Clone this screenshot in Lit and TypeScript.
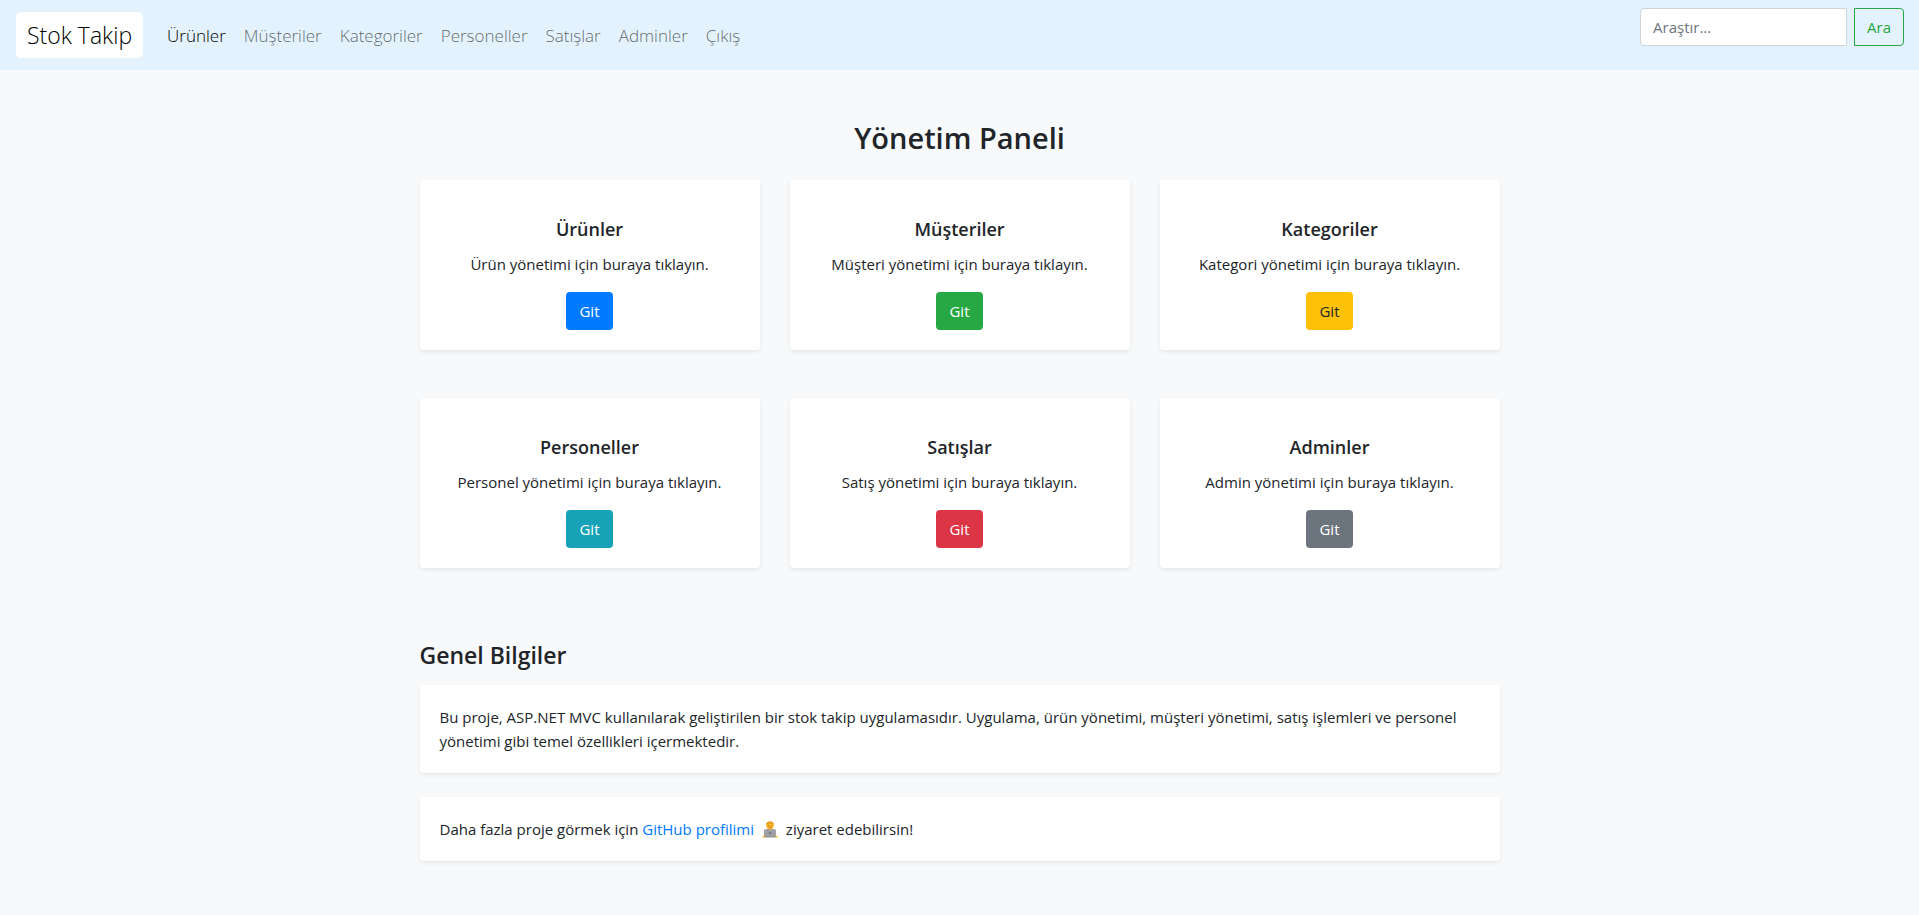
import { LitElement, html, css } from "lit";
import { customElement } from "lit/decorators.js";

interface Section {
  name: string;
  subject: string;
  tone: string;
}

const SECTIONS: Section[] = [
  { name: "Ürünler", subject: "Ürün", tone: "primary" },
  { name: "Müşteriler", subject: "Müşteri", tone: "success" },
  { name: "Kategoriler", subject: "Kategori", tone: "warning" },
  { name: "Personeller", subject: "Personel", tone: "info" },
  { name: "Satışlar", subject: "Satış", tone: "danger" },
  { name: "Adminler", subject: "Admin", tone: "secondary" },
];

const NAV = [...SECTIONS.map((s) => s.name), "Çıkış"];

@customElement("top-nav")
class TopNav extends LitElement {
  static styles = css`
    :host {
      display: block;
    }
    .bar {
      display: flex;
      align-items: flex-start;
      justify-content: space-between;
      padding: 8px 15px 8px 16px;
      min-height: 54px;
      background: #e3f2fd;
    }
    .left {
      display: flex;
      align-items: center;
      align-self: center;
      gap: 24px;
    }
    .brand {
      padding: 5px 11px;
      border-radius: 5px;
      background: #fff;
      color: #000;
      font-size: 23px;
      line-height: 36px;
      font-weight: 300;
      text-decoration: none;
    }
    .links {
      display: flex;
      gap: 18px;
      list-style: none;
      margin: 0;
      padding: 0;
    }
    .link {
      color: rgba(0, 0, 0, 0.6);
      font-size: 17px;
      line-height: 27px;
      font-weight: 300;
      text-decoration: none;
    }
    .active {
      color: #000;
    }
    .search {
      display: flex;
      gap: 7px;
    }
    .field {
      box-sizing: border-box;
      width: 207px;
      height: 38px;
      padding: 6px 12px;
      border: 1px solid #ced4da;
      border-radius: 4px 0 0 4px;
      background: #fff;
      font: inherit;
      color: #495057;
    }
    .field::placeholder {
      color: #6c757d;
      opacity: 1;
    }
    .go {
      height: 38px;
      padding: 0 12px;
      border: 1px solid #28a745;
      border-radius: 0 4px 4px 0;
      background: transparent;
      color: #28a745;
      font: inherit;
      cursor: pointer;
    }
  `;

  render() {
    return html`
      <nav class="bar">
        <div class="left">
          <a class="brand" href="#">Stok Takip</a>
          <ul class="links">
            ${NAV.map(
              (n, i) =>
                html`<li><a class="link ${i === 0 ? "active" : ""}" href="#">${n}</a></li>`
            )}
          </ul>
        </div>
        <form class="search">
          <input class="field" type="search" placeholder="Araştır..." aria-label="Araştır" />
          <button class="go" type="button">Ara</button>
        </form>
      </nav>
    `;
  }
}

@customElement("app-root")
class AppRoot extends LitElement {
  static styles = css`
    :host {
      display: block;
      min-height: 100vh;
      background: #f8f9fb;
      color: #212529;
      font-family: "Segoe UI", "Open Sans", "Noto Sans", sans-serif;
      font-size: 15px;
      line-height: 24px;
    }
    .page {
      max-width: 1080px;
      margin: 0 auto;
      padding: 48px 15px;
    }
    h1,
    h2,
    h3,
    p {
      margin: 0;
    }
    .title {
      margin-bottom: 22px;
      text-align: center;
      font-size: 29px;
      line-height: 40px;
      font-weight: 600;
    }
    .grid {
      display: grid;
      grid-template-columns: repeat(auto-fit, minmax(300px, 1fr));
      gap: 48px 30px;
    }
    .panel {
      padding: 20px;
      border-radius: 4px;
      background: #fff;
      box-shadow: 0 2px 4px rgba(0, 0, 0, 0.075);
    }
    .card {
      display: flex;
      flex-direction: column;
      align-items: center;
      padding-top: 36px;
      text-align: center;
    }
    .name {
      margin-bottom: 10px;
      font-size: 18px;
      line-height: 26px;
      font-weight: 600;
    }
    .git {
      margin-top: 16px;
      padding: 7px 13px;
      border-radius: 4px;
      color: #fff;
      text-decoration: none;
    }
    .primary {
      background: #007bff;
    }
    .success {
      background: #28a745;
    }
    .warning {
      background: #ffc107;
      color: #212529;
    }
    .info {
      background: #17a2b8;
    }
    .danger {
      background: #dc3545;
    }
    .secondary {
      background: #6c757d;
    }
    .about {
      margin-top: 72px;
    }
    .about .panel + .panel {
      margin-top: 24px;
    }
    .subtitle {
      margin-bottom: 15px;
      font-size: 23px;
      line-height: 30px;
      font-weight: 600;
    }
    .profile {
      color: #007bff;
      text-decoration: none;
    }
    .coder {
      width: 16px;
      height: 17px;
      margin: 0 4px;
      vertical-align: -3px;
    }
  `;

  render() {
    return html`
      <top-nav></top-nav>
      <main class="page">
        <h1 class="title">Yönetim Paneli</h1>
        <div class="grid">
          ${SECTIONS.map(
            (s) => html`
              <section class="panel card">
                <h3 class="name">${s.name}</h3>
                <p>${s.subject} yönetimi için buraya tıklayın.</p>
                <a class="git ${s.tone}" href="#">Git</a>
              </section>
            `
          )}
        </div>
        <section class="about">
          <h2 class="subtitle">Genel Bilgiler</h2>
          <p class="panel">
            Bu proje, ASP.NET MVC kullanılarak geliştirilen bir stok takip uygulamasıdır. Uygulama,
            ürün yönetimi, müşteri yönetimi, satış işlemleri ve personel yönetimi gibi temel
            özellikleri içermektedir.
          </p>
          <p class="panel">
            Daha fazla proje görmek için
            <a class="profile" href="#"
              >GitHub profilimi
              <svg class="coder" viewBox="0 0 16 17" aria-hidden="true">
                <path d="M3.500 9.500C4 8 6 7.500 8 7.500s4 .5 4.500 2z" fill="#8fa3ad" />
                <path d="M6.500 7h3v1.500L8 9.500 6.500 8.500z" fill="#f2a91f" />
                <circle cx="8" cy="4.400" r="3.800" fill="#fbb829" />
                <path d="M4.200 4.400C3.900 1.500 5.500.4 8 .4s4.100 1.100 3.800 4L10.500 3 8 2.600 5.500 3z" fill="#e69b16" />
                <circle cx="6.700" cy="4.800" r=".5" fill="#6b4a1b" />
                <circle cx="9.300" cy="4.800" r=".5" fill="#6b4a1b" />
                <path d="M7 6.500h2" stroke="#d8542c" stroke-width=".8" />
                <rect x="2" y="8.500" width="12" height="7.500" rx=".6" fill="#a0a0a3" />
                <circle cx="8" cy="12" r="1.100" fill="#666b75" />
                <path d="M.3 16.500c0-1.300.8-2 2.200-2l.5 2zM15.700 16.500c0-1.300-.8-2-2.200-2l-.5 2z" fill="#fbb829" />
                <path d="M2.500 15.500h11v1h-11z" fill="#8f8f8f" />
              </svg></a
            >
            ziyaret edebilirsin!
          </p>
        </section>
      </main>
    `;
  }
}
